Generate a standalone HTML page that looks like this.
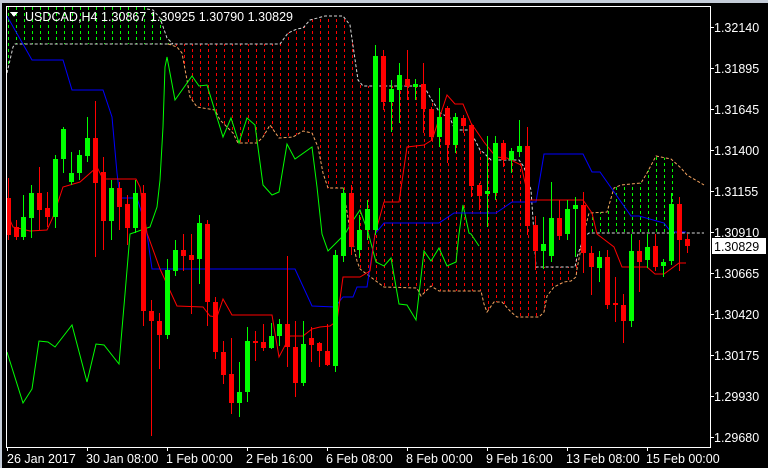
<!DOCTYPE html>
<html><head><meta charset="utf-8"><style>
html,body{margin:0;padding:0;background:#000;width:768px;height:468px;overflow:hidden}
svg{display:block}
text{font-family:"Liberation Sans",sans-serif;font-size:12.5px;fill:#fff}
</style></head><body>
<svg width="768" height="468" viewBox="0 0 768 468" xmlns="http://www.w3.org/2000/svg" shape-rendering="crispEdges">
<rect x="0" y="0" width="768" height="468" fill="#000"/>
<rect x="0" y="0" width="768" height="3" fill="#c4ccd8"/>
<rect x="0" y="3" width="2" height="465" fill="#c4ccd8"/>
<defs>
<clipPath id="cr"><polygon points="168,44 173,44 280,44 288,33 297,29 303,28 310,20 325,16 343,16 350,25 358,80 363,86 424,86 430,97 440,113 450,118 455,130 470,130 480,150 484,153 491,160 519,160 524,167 531,190 534,234 536,267 575,267 577,257 584,237 589,234 584,233 577,269 576,277 571,281 564,282 554,287 547,296 544,312 539,317 517,317 511,312 502,302 494,302 487,312 484,304 481,291 439,291 431,286 421,296 417,288 384,287 360,269 357,261 350,230 343,188 328,188 323,173 318,147 312,133 303,131 293,137 279,138 270,125 263,137 257,143 238,143 233,133 220,120 215,110 197,107 190,97 187,80 182,53 177,47"/></clipPath>
<clipPath id="cg"><polygon points="589,233 704,233 704,185 687,175 681,168 671,159 656,156 647,173 641,183 621,185 614,188 607,212 589,213 584,233"/><polygon points="7,73 13,47 15,44 173,44 167,38 160,18 153,10 147,7 7,7"/></clipPath>
<clipPath id="plot"><rect x="7" y="7" width="703" height="440"/></clipPath>
</defs>
<g clip-path="url(#plot)">
<path clip-path="url(#cr)" d="M8.5 7v440m8-440v440m8-440v440m8-440v440m8-440v440m8-440v440m8-440v440m8-440v440m8-440v440m8-440v440m8-440v440m8-440v440m8-440v440m8-440v440m8-440v440m8-440v440m8-440v440m8-440v440m8-440v440m8-440v440m8-440v440m8-440v440m8-440v440m8-440v440m8-440v440m8-440v440m8-440v440m8-440v440m8-440v440m8-440v440m8-440v440m8-440v440m8-440v440m8-440v440m8-440v440m8-440v440m8-440v440m8-440v440m8-440v440m8-440v440m8-440v440m8-440v440m8-440v440m8-440v440m8-440v440m8-440v440m8-440v440m8-440v440m8-440v440m8-440v440m8-440v440m8-440v440m8-440v440m8-440v440m8-440v440m8-440v440m8-440v440m8-440v440m8-440v440m8-440v440m8-440v440m8-440v440m8-440v440m8-440v440m8-440v440m8-440v440m8-440v440m8-440v440m8-440v440m8-440v440m8-440v440m8-440v440m8-440v440m8-440v440m8-440v440m8-440v440m8-440v440m8-440v440m8-440v440m8-440v440m8-440v440m8-440v440m8-440v440m8-440v440m8-440v440" stroke="#ff0000" stroke-width="1" stroke-dasharray="3,3" fill="none"/>
<path clip-path="url(#cg)" d="M8.5 7v440m8-440v440m8-440v440m8-440v440m8-440v440m8-440v440m8-440v440m8-440v440m8-440v440m8-440v440m8-440v440m8-440v440m8-440v440m8-440v440m8-440v440m8-440v440m8-440v440m8-440v440m8-440v440m8-440v440m8-440v440m8-440v440m8-440v440m8-440v440m8-440v440m8-440v440m8-440v440m8-440v440m8-440v440m8-440v440m8-440v440m8-440v440m8-440v440m8-440v440m8-440v440m8-440v440m8-440v440m8-440v440m8-440v440m8-440v440m8-440v440m8-440v440m8-440v440m8-440v440m8-440v440m8-440v440m8-440v440m8-440v440m8-440v440m8-440v440m8-440v440m8-440v440m8-440v440m8-440v440m8-440v440m8-440v440m8-440v440m8-440v440m8-440v440m8-440v440m8-440v440m8-440v440m8-440v440m8-440v440m8-440v440m8-440v440m8-440v440m8-440v440m8-440v440m8-440v440m8-440v440m8-440v440m8-440v440m8-440v440m8-440v440m8-440v440m8-440v440m8-440v440m8-440v440m8-440v440m8-440v440m8-440v440m8-440v440m8-440v440" stroke="#00ff00" stroke-width="1" stroke-dasharray="3,3" fill="none"/>
<g shape-rendering="auto" fill="none" stroke-width="1">
<polyline stroke="#d8d8d8" stroke-dasharray="3,2" points="7,73 13,47 15,44 280,44 288,33 297,29 303,28 310,20 325,16 343,16 350,25 358,80 363,86 424,86 430,97 440,113 450,118 455,130 470,130 480,150 484,153 491,160 519,160 524,167 531,190 534,234 536,267 575,267 577,257 584,237 589,233 704,233"/>
<polyline stroke="#d8d8d8" stroke-dasharray="3,2" points="147,9 153,10 160,18 167,38 173,44"/>
<polyline stroke="#f4a460" stroke-dasharray="3,2" points="168,44 177,47 182,53 187,80 190,97 197,107 215,110 220,120 233,133 238,143 257,143 263,137 270,125 279,138 293,137 303,131 312,133 318,147 323,173 328,188 343,188 350,230 357,261 360,269 384,287 417,288 421,296 431,286 439,291 481,291 484,304 487,312 494,302 502,302 511,312 517,317 539,317 544,312 547,296 554,287 564,282 571,281 576,277 577,269 584,233 589,213 607,212 614,188 621,185 641,183 647,173 656,156 671,159 681,168 687,175 704,185"/>
<polyline stroke="#00ff00" points="7,352 23,403 32,389 39,341 48,342 55,347 72,325 87,382 96,344 104,345 119,364 125,294 130,234 150,227 157,207 160,180 163,127 165,67 167,57 175,100 192,76 199,86 207,85 223,137 231,118 239,143 247,118 255,125 263,185 272,195 279,192 287,144 295,159 312,147 317,187 322,234 328,251 337,242 345,234 352,222 360,210 368,232 376,262 384,266 391,258 399,304 407,305 416,320 424,251 431,261 439,248 447,266 456,262 459,234 463,205 469,233 471,234 479,246"/>
<polyline stroke="#0000ff" points="7,16 32,60 63,60 72,90 103,90 112,117 117,173 120,198 137,198 143,217 147,234 152,269 295,269 312,306 335,307 343,297 353,297 357,287 367,287 375,234 384,223 439,223 454,213 496,213 512,202 536,202 544,154 583,154 592,172 600,172 631,216 639,216 664,223 671,232 686,232"/>
<polyline stroke="#ff0000" points="7,213 13,227 30,231 47,230 53,217 63,187 80,182 97,167 103,179 136,179 140,187 147,233 160,269 177,306 203,307 210,316 217,317 223,299 232,315 272,315 279,357 290,336 303,336 312,329 320,327 330,326 337,321 343,277 360,277 370,271 375,234 384,202 399,202 407,147 424,145 432,140 447,95 455,104 463,104 471,123 484,142 496,157 507,158 521,165 529,200 583,200 592,213 597,234 614,247 622,267 647,267 655,274 664,274 679,263 686,263"/>
</g>
<path stroke="#ff0000" fill="none" d="M8.5 178V240M16.5 220V240M39.5 167V230M47.5 192V227M95.5 101V257M103.5 157V250M119.5 182V230M127.5 195V245M143.5 185V326M151.5 300V436M159.5 313V369M183.5 234V271M191.5 234V314M207.5 220V326M215.5 297V359M223.5 341V384M231.5 338V414M255.5 331V361M263.5 324V351M287.5 256V367M295.5 321V397M311.5 327V362M319.5 342V367M327.5 324V366M351.5 185V255M383.5 50V110M407.5 50V100M423.5 63V133M431.5 107V140M447.5 106V163M463.5 115V133M471.5 124V197M479.5 183V210M503.5 140V167M527.5 127V235M535.5 216V270M559.5 200V240M583.5 192V273M591.5 246V295M607.5 250V309M615.5 277V322M623.5 294V343M639.5 240V292M655.5 234V271M679.5 197V271M687.5 234V253"/>
<path fill="#ff0000" d="M6 198h5V235h-5zM14 227h5V237h-5zM37 193h5V210h-5zM45 208h5V217h-5zM93 138h5V183h-5zM101 172h5V221h-5zM117 188h5V207h-5zM125 204h5V228h-5zM141 193h5V311h-5zM149 311h5V321h-5zM157 321h5V335h-5zM181 250h5V256h-5zM189 255h5V260h-5zM205 224h5V302h-5zM213 302h5V352h-5zM221 352h5V375h-5zM229 374h5V403h-5zM253 341h5V343h-5zM261 342h5V348h-5zM285 324h5V347h-5zM293 347h5V383h-5zM309 338h5V345h-5zM317 343h5V351h-5zM325 351h5V365h-5zM349 193h5V247h-5zM381 56h5V102h-5zM405 79h5V86h-5zM421 84h5V109h-5zM429 109h5V137h-5zM445 108h5V145h-5zM461 118h5V126h-5zM469 125h5V186h-5zM477 185h5V196h-5zM501 143h5V160h-5zM525 146h5V226h-5zM533 225h5V251h-5zM557 218h5V236h-5zM581 205h5V253h-5zM589 253h5V267h-5zM605 257h5V305h-5zM613 303h5V305h-5zM621 305h5V321h-5zM637 251h5V262h-5zM653 246h5V267h-5zM677 204h5V240h-5zM685 239h5V246h-5z"/>
<path stroke="#00ff00" fill="none" d="M23.5 195V240M31.5 185V238M55.5 155V228M63.5 127V173M71.5 152V185M79.5 150V180M87.5 117V162M111.5 180V240M135.5 180V233M167.5 259V339M175.5 240V276M199.5 215V284M239.5 362V417M247.5 327V402M271.5 323V349M279.5 319V346M303.5 321V386M335.5 250V372M343.5 188V262M359.5 215V258M367.5 200V240M375.5 45V235M391.5 80V132M399.5 63V123M415.5 79V100M439.5 88V147M455.5 113V153M487.5 136V227M495.5 136V200M511.5 148V173M519.5 120V157M543.5 217V269M551.5 182V262M567.5 200V240M575.5 197V257M599.5 251V282M631.5 234V327M647.5 234V268M663.5 259V277M671.5 193V265"/>
<path fill="#00ff00" d="M21 217h5V237h-5zM29 193h5V218h-5zM53 159h5V217h-5zM61 129h5V159h-5zM69 173h5V182h-5zM77 155h5V173h-5zM85 138h5V156h-5zM109 188h5V221h-5zM133 193h5V228h-5zM165 270h5V335h-5zM173 250h5V271h-5zM197 223h5V259h-5zM237 392h5V403h-5zM245 341h5V392h-5zM269 336h5V348h-5zM277 324h5V336h-5zM301 344h5V383h-5zM333 255h5V366h-5zM341 193h5V256h-5zM357 230h5V250h-5zM365 209h5V230h-5zM373 56h5V230h-5zM389 89h5V102h-5zM397 75h5V90h-5zM413 84h5V87h-5zM437 117h5V137h-5zM453 117h5V145h-5zM485 191h5V194h-5zM493 143h5V193h-5zM509 151h5V160h-5zM517 146h5V152h-5zM541 244h5V251h-5zM549 218h5V256h-5zM565 209h5V234h-5zM573 205h5V209h-5zM597 257h5V268h-5zM629 251h5V321h-5zM645 247h5V260h-5zM661 262h5V266h-5zM669 204h5V261h-5z"/>
</g>
<rect x="6.5" y="6.5" width="704" height="441" fill="none" stroke="#fff" stroke-width="1"/>
<path stroke="#fff" d="M710 27.5h4M710 68.5h4M710 109.5h4M710 150.5h4M710 191.5h4M710 232.5h4M710 273.5h4M710 314.5h4M710 355.5h4M710 396.5h4M710 437.5h4M7.5 447v4M87.5 447v4M167.5 447v4M247.5 447v4M327.5 447v4M407.5 447v4M487.5 447v4M567.5 447v4M647.5 447v4"/>
<polygon points="10,12 18,12 14,17" fill="#fff"/>
<text x="25" y="21" textLength="268" lengthAdjust="spacing">USDCAD,H4  1.30867 1.30925 1.30790 1.30829</text>
<g>
<text x="714" y="32">1.32140</text>
<text x="714" y="73">1.31895</text>
<text x="714" y="114">1.31645</text>
<text x="714" y="155">1.31400</text>
<text x="714" y="196">1.31155</text>
<text x="714" y="237">1.30910</text>
<rect x="712" y="238" width="54" height="16" fill="#fff"/>
<text x="714" y="251" style="fill:#000">1.30829</text>
<text x="714" y="278">1.30665</text>
<text x="714" y="319">1.30420</text>
<text x="714" y="360">1.30175</text>
<text x="714" y="401">1.29930</text>
<text x="714" y="442">1.29680</text>
</g>
<text x="7" y="463">26 Jan 2017</text>
<text x="86" y="463">30 Jan 08:00</text>
<text x="166" y="463">1 Feb 00:00</text>
<text x="246" y="463">2 Feb 16:00</text>
<text x="326" y="463">6 Feb 08:00</text>
<text x="406" y="463">8 Feb 00:00</text>
<text x="486" y="463">9 Feb 16:00</text>
<text x="566" y="463">13 Feb 08:00</text>
<text x="646" y="463">15 Feb 00:00</text>
</svg>
</body></html>
